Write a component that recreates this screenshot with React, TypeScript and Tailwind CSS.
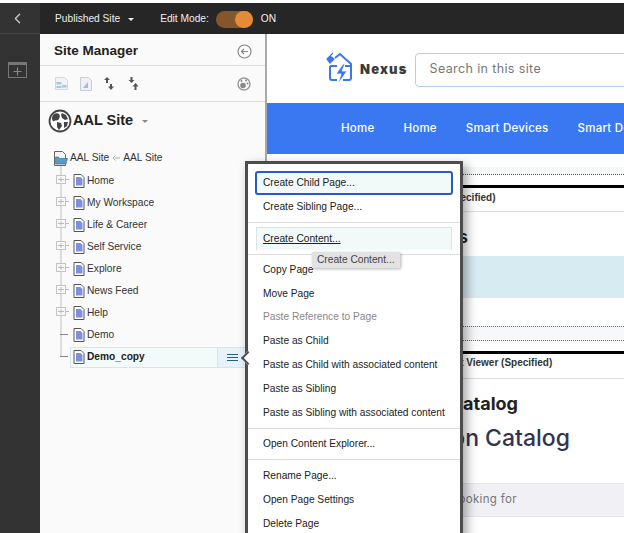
import { ChevronLeft } from 'lucide-react'

const sans = "font-['Liberation_Sans',Arial,sans-serif]"
const inter = "font-['Inter',sans-serif]"

const treeItems = ['Home', 'My Workspace', 'Life & Career', 'Self Service', 'Explore', 'News Feed', 'Help']

function PageIcon() {
  return (
    <svg width="12" height="14" viewBox="0 0 12 14" className="shrink-0">
      <path d="M1 .5h7l3 3v10H1z" fill="#fff" stroke="#555" />
      <path d="M3 3h4.500l2 2v6.500H3z" fill="#7f8fe0" />
    </svg>
  )
}

function Expander() {
  return (
    <svg width="14" height="10" viewBox="0 0 14 10" className="shrink-0">
      <rect x=".5" y=".5" width="9" height="8" fill="#f8f8f8" stroke="#c4c4c4" />
      <path d="M2 4.500h6M5 2v5M10 4.500h3" stroke="#bbb" />
    </svg>
  )
}

function TreeRow({ label }: { label: string }) {
  return (
    <div className="flex h-[22px] items-center">
      <div className="ml-[2px] w-[17px] shrink-0 -mt-[3px]">
        <Expander />
      </div>
      <div className="flex items-center gap-[2px]">
        <PageIcon />
        <span className="text-[10.200px] text-[#333]">{label}</span>
      </div>
    </div>
  )
}

function SiteManager() {
  return (
    <aside className={`${sans} relative w-[227px] shrink-0 border-r-2 border-[#aaa] bg-[#fafafa]`}>
      <div className="flex h-[32px] items-center justify-between border-b border-[#ddd] pl-[14px] pr-[13px] pt-[3px]">
        <span className="text-[13.500px] font-bold text-[#222]">Site Manager</span>
        <svg width="15" height="15" viewBox="0 0 15 15">
          <circle cx="7.500" cy="7.500" r="6.500" fill="none" stroke="#888" strokeWidth="1.200" />
          <path d="M11 7.500H4.500M7 5 4.500 7.500 7 10" fill="none" stroke="#888" strokeWidth="1.200" />
        </svg>
      </div>
      <div className="flex h-[36px] items-center border-b border-[#ddd] pl-[15px] pr-[14px]">
        <svg width="13" height="13" viewBox="0 0 13 13">
          <path d="M.5.500h9l3 3v9H.5z" fill="#eef3f5" stroke="#d2d9de" />
          <path d="M1.500 5h5v2.500h-5zM7 8h4.500v2.500H7zM1.500 9h5v2h-5z" fill="#a8c8dc" />
        </svg>
        <svg width="12" height="14" viewBox="0 0 12 14" className="ml-[12px]">
          <path d="M.5.500h8l3 3v10H.5z" fill="#f0f1f8" stroke="#c8ccd6" />
          <path d="M3 11l5-6v6z" fill="#aab4e6" />
        </svg>
        <svg width="10" height="13" viewBox="0 0 10 13" className="ml-[12px]">
          <path d="M3 0l3 3H4v3H2V3H0zM7 13 4 9.500h2V7h2v2.500h2z" fill="#555" />
        </svg>
        <svg width="11" height="13" viewBox="0 0 11 13" className="ml-[14px]">
          <path d="M3.500 6 .5 3h2V0h2v3h2zM7.500 6l3 3.500h-2V13h-2V9.500h-2z" fill="#555" />
        </svg>
        <svg width="14" height="14" viewBox="0 0 14 14" className="ml-auto">
          <circle cx="7" cy="7" r="6" fill="none" stroke="#999" strokeWidth="1.400" />
          <circle cx="6" cy="8.500" r="2.800" fill="#888" />
          <circle cx="4.500" cy="4" r="1" fill="#888" />
          <circle cx="9" cy="3.500" r="1" fill="#888" />
          <circle cx="10.500" cy="6.500" r="1" fill="#888" />
        </svg>
      </div>
      <div className="flex items-center pl-[8px] pt-[7px]">
        <svg width="24" height="24" viewBox="0 0 24 24">
          <circle cx="12" cy="12" r="10.500" fill="#fff" stroke="#444" strokeWidth="1.800" />
          <path d="M6 5c2-1 4-1 5 0s1 3 0 5-4 1-5 2-2-1-2-3 1-3 2-4zM14 4l4 2 2 4-3 1-3-2-1-3zM9 13l4 1 1 3-3 4-2-3zM16 13h4l-1 4-3 2z" fill="#444" />
        </svg>
        <span className="ml-[1px] text-[14.500px] font-bold text-[#222]">AAL Site</span>
        <span className="ml-[9px] h-0 w-0 border-x-[3px] border-t-[3px] border-x-transparent border-t-[#888]" />
      </div>
      <div className="pl-[14px] pt-[15px]">
        <div className="flex h-[20px] items-center">
          <svg width="14" height="15" viewBox="0 0 14 15" className="shrink-0">
            <path d="M.5.500h8l3 3v11H.5z" fill="#f4f4f4" stroke="#666" />
            <path d="M1.500 6h3l1 1.500h8l-1.500 5.500h-10.500z" fill="#5b9bc9" stroke="#35678c" strokeWidth=".6" />
          </svg>
          <span className="ml-[2px] text-[10.200px] text-[#333]">AAL Site</span>
          <svg width="8" height="6" viewBox="0 0 8 6" className="mx-[3px]">
            <path d="M8 3H3M3.500.500 1 3l2.500 2.500" fill="none" stroke="#aaa" />
          </svg>
          <span className="text-[10.200px] text-[#333]">AAL Site</span>
        </div>
        <div className="relative mt-[2px]">
          <div className="absolute bottom-[12px] left-[6px] top-[-4px] w-[2px] bg-[#ddd]" />
          <div className="relative">
            {treeItems.map((item) => (
              <TreeRow key={item} label={item} />
            ))}
            <div className="flex h-[22px] items-center">
              <div className="ml-[6px] mr-[5px] h-px w-[8px] shrink-0 -translate-y-[1px] bg-[#888]" />
              <div className="flex items-center gap-[2px]">
                <PageIcon />
                <span className="text-[10.200px] text-[#333]">Demo</span>
              </div>
            </div>
            <div className="flex h-[22px] items-center">
              <div className="ml-[6px] mr-[2px] h-px w-[8px] shrink-0 -translate-y-[1px] bg-[#888]" />
              <div className="flex h-[21px] flex-1 items-center gap-[2px] border border-[#d4e6ea] bg-[#f2fafa] pl-[2px]">
                <PageIcon />
                <span className="text-[10.200px] font-bold text-[#222]">Demo_copy</span>
                <div className="ml-auto flex h-full w-[47px] items-center border-l border-[#d4e6ea] bg-[#e6f3f8] pl-[9px]">
                  <div className="flex w-[11px] flex-col gap-[2px]">
                    <span className="h-px bg-[#2a5c8c]" />
                    <span className="h-px bg-[#2a5c8c]" />
                    <span className="h-px bg-[#2a5c8c]" />
                  </div>
                </div>
              </div>
            </div>
          </div>
        </div>
      </div>
    </aside>
  )
}

function MenuItem({ label, muted }: { label: string; muted?: boolean }) {
  return (
    <div className={`h-[23.800px] pl-[15px] text-[10.200px] leading-[23px] ${muted ? 'text-[#888]' : 'text-[#222]'}`}>{label}</div>
  )
}

function ContextMenu() {
  return (
    <div className={`${sans} absolute left-[245px] top-[161px] h-[380px] w-[218px] border-[3px] border-[#4d4d4d] bg-white shadow-[4px_4px_10px_rgba(0,0,0,0.35)]`}>
      <div className="absolute left-[-10px] top-[189px] h-[10px] w-[10px] translate-x-[5px] rotate-45 border-b-2 border-l-2 border-[#4d4d4d] bg-white" />
      <div className="pt-[7px]">
        <div className="mx-[7px] h-[24px] rounded-[3px] border-2 border-[#2a5cc0] bg-[#f1f9f9] pl-[6px] text-[10.200px] leading-[20px] text-[#222]">
          Create Child Page...
        </div>
        <MenuItem label="Create Sibling Page..." />
      </div>
      <div className="mt-[3px] border-t border-[#ddd] pt-[4px]">
        <div className="mx-[8px] h-[23px] border-x border-t border-[#d4e6ea] bg-[#f1f9f9] pl-[6px] text-[10.200px] leading-[21px] text-[#222] underline">
          Create Content...
        </div>
      </div>
      <div className="mt-[4px] border-t border-[#ddd] pt-[3px]">
        <MenuItem label="Copy Page" />
        <MenuItem label="Move Page" />
        <MenuItem label="Paste Reference to Page" muted />
        <MenuItem label="Paste as Child" />
        <MenuItem label="Paste as Child with associated content" />
        <MenuItem label="Paste as Sibling" />
        <MenuItem label="Paste as Sibling with associated content" />
      </div>
      <div className="mt-[4px] border-t border-[#ddd] py-[3px]">
        <MenuItem label="Open Content Explorer..." />
      </div>
      <div className="border-t border-[#ddd] pt-[4px]">
        <MenuItem label="Rename Page..." />
        <MenuItem label="Open Page Settings" />
        <MenuItem label="Delete Page" />
      </div>
      <div className="absolute left-[64px] top-[88px] flex h-[16px] items-center bg-[#e2e2e2] px-[5px] text-[10.200px] text-[#444] shadow-[1px_1px_3px_rgba(0,0,0,0.3)]">
        Create Content...
      </div>
    </div>
  )
}

function PageContent() {
  return (
    <main className={`${inter} min-w-0 flex-1 overflow-hidden bg-white`}>
      <div className="flex h-[69px] items-center pl-[59px] pt-[2px]">
        <svg width="28" height="34" viewBox="0 0 28 34" className="shrink-0 -mt-[1px]">
          <path d="M4 14v12q0 2 2 2h5M17 28h6q2 0 2-2V12L14 2 9 6" fill="none" stroke="#3a78f2" strokeWidth="2" />
          <path d="M4 14h7M19 14h6" fill="none" stroke="#3a78f2" strokeWidth="2" />
          <path d="M1 7l3-3 4 3-4 4zM4 4 7 1" fill="#3a78f2" stroke="#3a78f2" strokeWidth="1.200" />
          <path d="M17 12l-7 10h5l-3 10 9-13h-5l3-7z" fill="#3a78f2" stroke="#fff" strokeWidth=".8" />
        </svg>
        <span className="ml-[6px] text-[13px] font-black tracking-[0.09em] text-[#3a3a3a]">Nexus</span>
        <div className="ml-[7px] flex h-[34px] w-[300px] shrink-0 items-center rounded-[4px] border border-[#b4cbf7] pl-[14px] text-[12.500px] tracking-[0.03em] text-[#777]">
          Search in this site
        </div>
      </div>
      <div className="flex h-[51px] items-center whitespace-nowrap bg-[#3a78f2] pl-[74px] pt-[1px] text-[11.500px] font-medium tracking-[0.02em] text-white">
        <span>Home</span>
        <span className="ml-[29px]">Home</span>
        <span className="ml-[29px]">Smart Devices</span>
        <span className="ml-[29px]">Smart Devices</span>
      </div>
      <div className={sans}>
        <div className="mt-[13px] h-[8px] border-b border-dotted border-[#555] bg-[#f7f8f9]" />
        <div className="mt-[10px] h-[3px] bg-black" />
        <div className="h-[24px] border-b border-[#ddd] whitespace-nowrap pl-[102px] text-[10px] font-bold leading-[20px] text-[#333]">
          Content Viewer (Specified)
        </div>
        <div className="flex h-[44px] justify-end whitespace-nowrap pr-[156px] text-[18px] font-bold leading-[50px] text-[#222]">
          Solutions
        </div>
        <div className="h-[42px] bg-[#d7ecf2]" />
        <div className="h-[28px]" />
        <div className="h-[15px] border-y border-dotted border-[#666] bg-[#f7f8f9]" />
        <div className="mt-[10px] h-[3px] bg-black" />
        <div className="h-[25px] border-b border-[#ddd] whitespace-nowrap pl-[135px] text-[10px] font-bold leading-[18px] text-[#333]">
          Web Content Viewer (Specified)
        </div>
      </div>
      <div className="whitespace-nowrap">
        <div className="flex h-[48px] items-center justify-end pr-[106px] text-[18px] font-bold text-[#222]">Application Catalog</div>
        <div className="mt-[1px] flex h-[20px] items-center justify-end pr-[54px] text-[23px] font-medium text-[#33334f]">Application Catalog</div>
        <div className="mt-[35px] flex h-[34px] items-center justify-end border-y border-[#e5e5ea] bg-[#f0f0f5] pr-[107px] text-[11.500px] tracking-[0.03em] text-[#777]">
          What are you looking for
        </div>
      </div>
    </main>
  )
}

export default function App() {
  return (
    <div className="relative h-[533px] w-[624px] overflow-hidden bg-white pt-[3px]">
      <header className={`${sans} flex h-[31px] items-stretch bg-[#262626] pt-[1px] text-[10.200px] text-[#eee]`}>
        <div className="-mt-[1px] flex w-[40px] items-center justify-center border-b border-[#444] bg-[#333] pr-[6px]">
          <ChevronLeft size={17} strokeWidth={1.800} className="text-[#ccc]" />
        </div>
        <div className="ml-[15px] flex items-center">
          <span>Published Site</span>
          <span className="ml-[8px] h-0 w-0 border-x-[3.500px] border-t-[3.500px] border-x-transparent border-t-[#eee]" />
          <span className="ml-[26px]">Edit Mode:</span>
          <div className="ml-[7px] flex h-[17px] w-[37px] justify-end rounded-full bg-[#85562b]">
            <span className="h-[17px] w-[18px] rounded-full bg-[#e58a36]" />
          </div>
          <span className="ml-[8px]">ON</span>
        </div>
      </header>
      <div className="flex h-[499px]">
        <div className="flex w-[40px] shrink-0 justify-center bg-[#333] pr-[6px] pt-[28px]">
          <svg width="19" height="16" viewBox="0 0 19 16">
            <rect x=".5" y=".5" width="18" height="15" fill="none" stroke="#777" />
            <rect x="0" y="0" width="19" height="3" fill="#777" />
            <path d="M9.500 5.500v8M5.500 9.500h8" stroke="#888" strokeWidth="1.200" />
          </svg>
        </div>
        <SiteManager />
        <PageContent />
      </div>
      <ContextMenu />
    </div>
  )
}
